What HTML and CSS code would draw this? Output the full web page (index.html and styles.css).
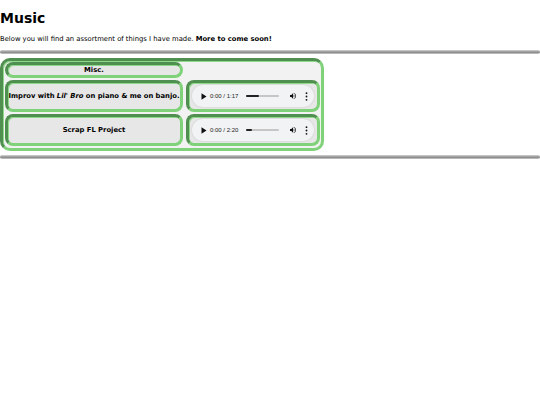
FILE: index.html
```html
<!DOCTYPE html>
<html>
<head>
<meta charset="utf-8">
<link rel="stylesheet" href="styles.css">
</head>
<body>
<h1 class="title">Music</h1>
<p class="intro">Below you will find an assortment of things I have made. <b>More to come soon!</b></p>
<div class="rule first"></div>
<div class="box">
  <div class="grid">
    <div class="cell head"><span>Misc.</span></div>
    <div class="empty"></div>
    <div class="cell name"><span>Improv with <i>Lil' Bro</i> on piano &amp; me on banjo.</span></div>
    <div class="cell player-cell">
      <div class="player">
        <svg class="play" width="6" height="7" viewBox="0 0 6 7"><path d="M0.5 0.3 L5.5 3.5 L0.5 6.7 Z" fill="#111"/></svg>
        <span class="time">0:00 / 1:17</span>
        <span class="track"><span class="fill" style="width:38%"></span></span>
        <svg class="vol" width="8" height="8" viewBox="0 0 24 24"><path d="M3 9v6h4l5 5V4L7 9H3zm13.5 3A4.5 4.5 0 0 0 14 7.97v8.05c1.48-.73 2.5-2.25 2.5-4.02zM14 3.23v2.06c2.89.86 5 3.54 5 6.71s-2.11 5.85-5 6.71v2.06c4.01-.91 7-4.49 7-8.77s-2.99-7.86-7-8.77z" fill="#111"/></svg>
        <svg class="menu" width="3" height="9" viewBox="0 0 3 9"><circle cx="1.5" cy="1.2" r="0.9" fill="#111"/><circle cx="1.5" cy="4.5" r="0.9" fill="#111"/><circle cx="1.5" cy="7.8" r="0.9" fill="#111"/></svg>
      </div>
    </div>
    <div class="cell name"><span>Scrap FL Project</span></div>
    <div class="cell player-cell">
      <div class="player">
        <svg class="play" width="6" height="7" viewBox="0 0 6 7"><path d="M0.5 0.3 L5.5 3.5 L0.5 6.7 Z" fill="#111"/></svg>
        <span class="time">0:00 / 2:20</span>
        <span class="track"><span class="fill" style="width:16%"></span></span>
        <svg class="vol" width="8" height="8" viewBox="0 0 24 24"><path d="M3 9v6h4l5 5V4L7 9H3zm13.5 3A4.5 4.5 0 0 0 14 7.97v8.05c1.48-.73 2.5-2.25 2.5-4.02zM14 3.23v2.06c2.89.86 5 3.54 5 6.71s-2.11 5.85-5 6.71v2.06c4.01-.91 7-4.49 7-8.77s-2.99-7.86-7-8.77z" fill="#111"/></svg>
        <svg class="menu" width="3" height="9" viewBox="0 0 3 9"><circle cx="1.5" cy="1.2" r="0.9" fill="#111"/><circle cx="1.5" cy="4.5" r="0.9" fill="#111"/><circle cx="1.5" cy="7.8" r="0.9" fill="#111"/></svg>
      </div>
    </div>
  </div>
</div>
<div class="rule"></div>
</body>
</html>
```

FILE: styles.css
```css
html, body {
  margin: 0;
  padding: 0;
  background: #fff;
}
body {
  font-family: "DejaVu Sans", Verdana, sans-serif;
  color: #000;
}
.title {
  font-size: 14px;
  font-weight: bold;
  margin: 10px 0 0 0;
  line-height: 16px;
}
.intro {
  font-size: 6.8px;
  margin: 9px 0 0 0;
  line-height: 8px;
}
.rule {
  height: 4px;
  border-radius: 2px;
  background: linear-gradient(#dcdcdc 0, #b0b0b0 25%, #8c8c8c 60%, #cccccc 100%);
}
.rule.first {
  margin-top: 7px;
}
.box {
  width: 318px;
  margin-top: 4px;
  margin-bottom: 4px;
  border: 3px solid;
  border-color: #4f8f4f #80d27a #80d27a #4f8f4f;
  box-shadow: inset 1px 1px 0 #8fd98a;
  border-radius: 10px;
  background: #f2f2f2;
}
.grid {
  display: grid;
  grid-template-columns: 178px 134px;
  grid-template-rows: 16px 32px 32px;
  gap: 2px 3px;
  padding: 1px 1px 2px 2px;
}
.cell {
  box-sizing: border-box;
  border: 3px solid;
  border-color: #4f8f4f #80d27a #80d27a #4f8f4f;
  box-shadow: inset 1px 1px 0 #8fd98a;
  border-radius: 8px;
  background: #e7e7e7;
  display: flex;
  align-items: center;
  justify-content: center;
  font-size: 6.8px;
  font-weight: bold;
}
.player-cell {
  padding: 2px 3px;
}
.player {
  flex: 1;
  height: 22px;
  border-radius: 11px;
  background: #f1f3f4;
  box-shadow: 0 0 2px rgba(0,0,0,0.15);
  display: flex;
  align-items: center;
  padding: 0 0 0 9px;
}
.play {
  flex: none;
}
.time {
  font-family: "Liberation Sans", Arial, sans-serif;
  font-size: 6px;
  font-weight: normal;
  color: #222;
  margin-left: 3px;
  white-space: nowrap;
}
.track {
  width: 33px;
  height: 2px;
  margin-left: 8px;
  background: #c6c6c6;
  border-radius: 1px;
  display: flex;
}
.fill {
  height: 2px;
  background: #222;
  border-radius: 1px;
}
.vol {
  margin-left: 10px;
  flex: none;
}
.menu {
  margin-left: 8px;
  flex: none;
}
```
